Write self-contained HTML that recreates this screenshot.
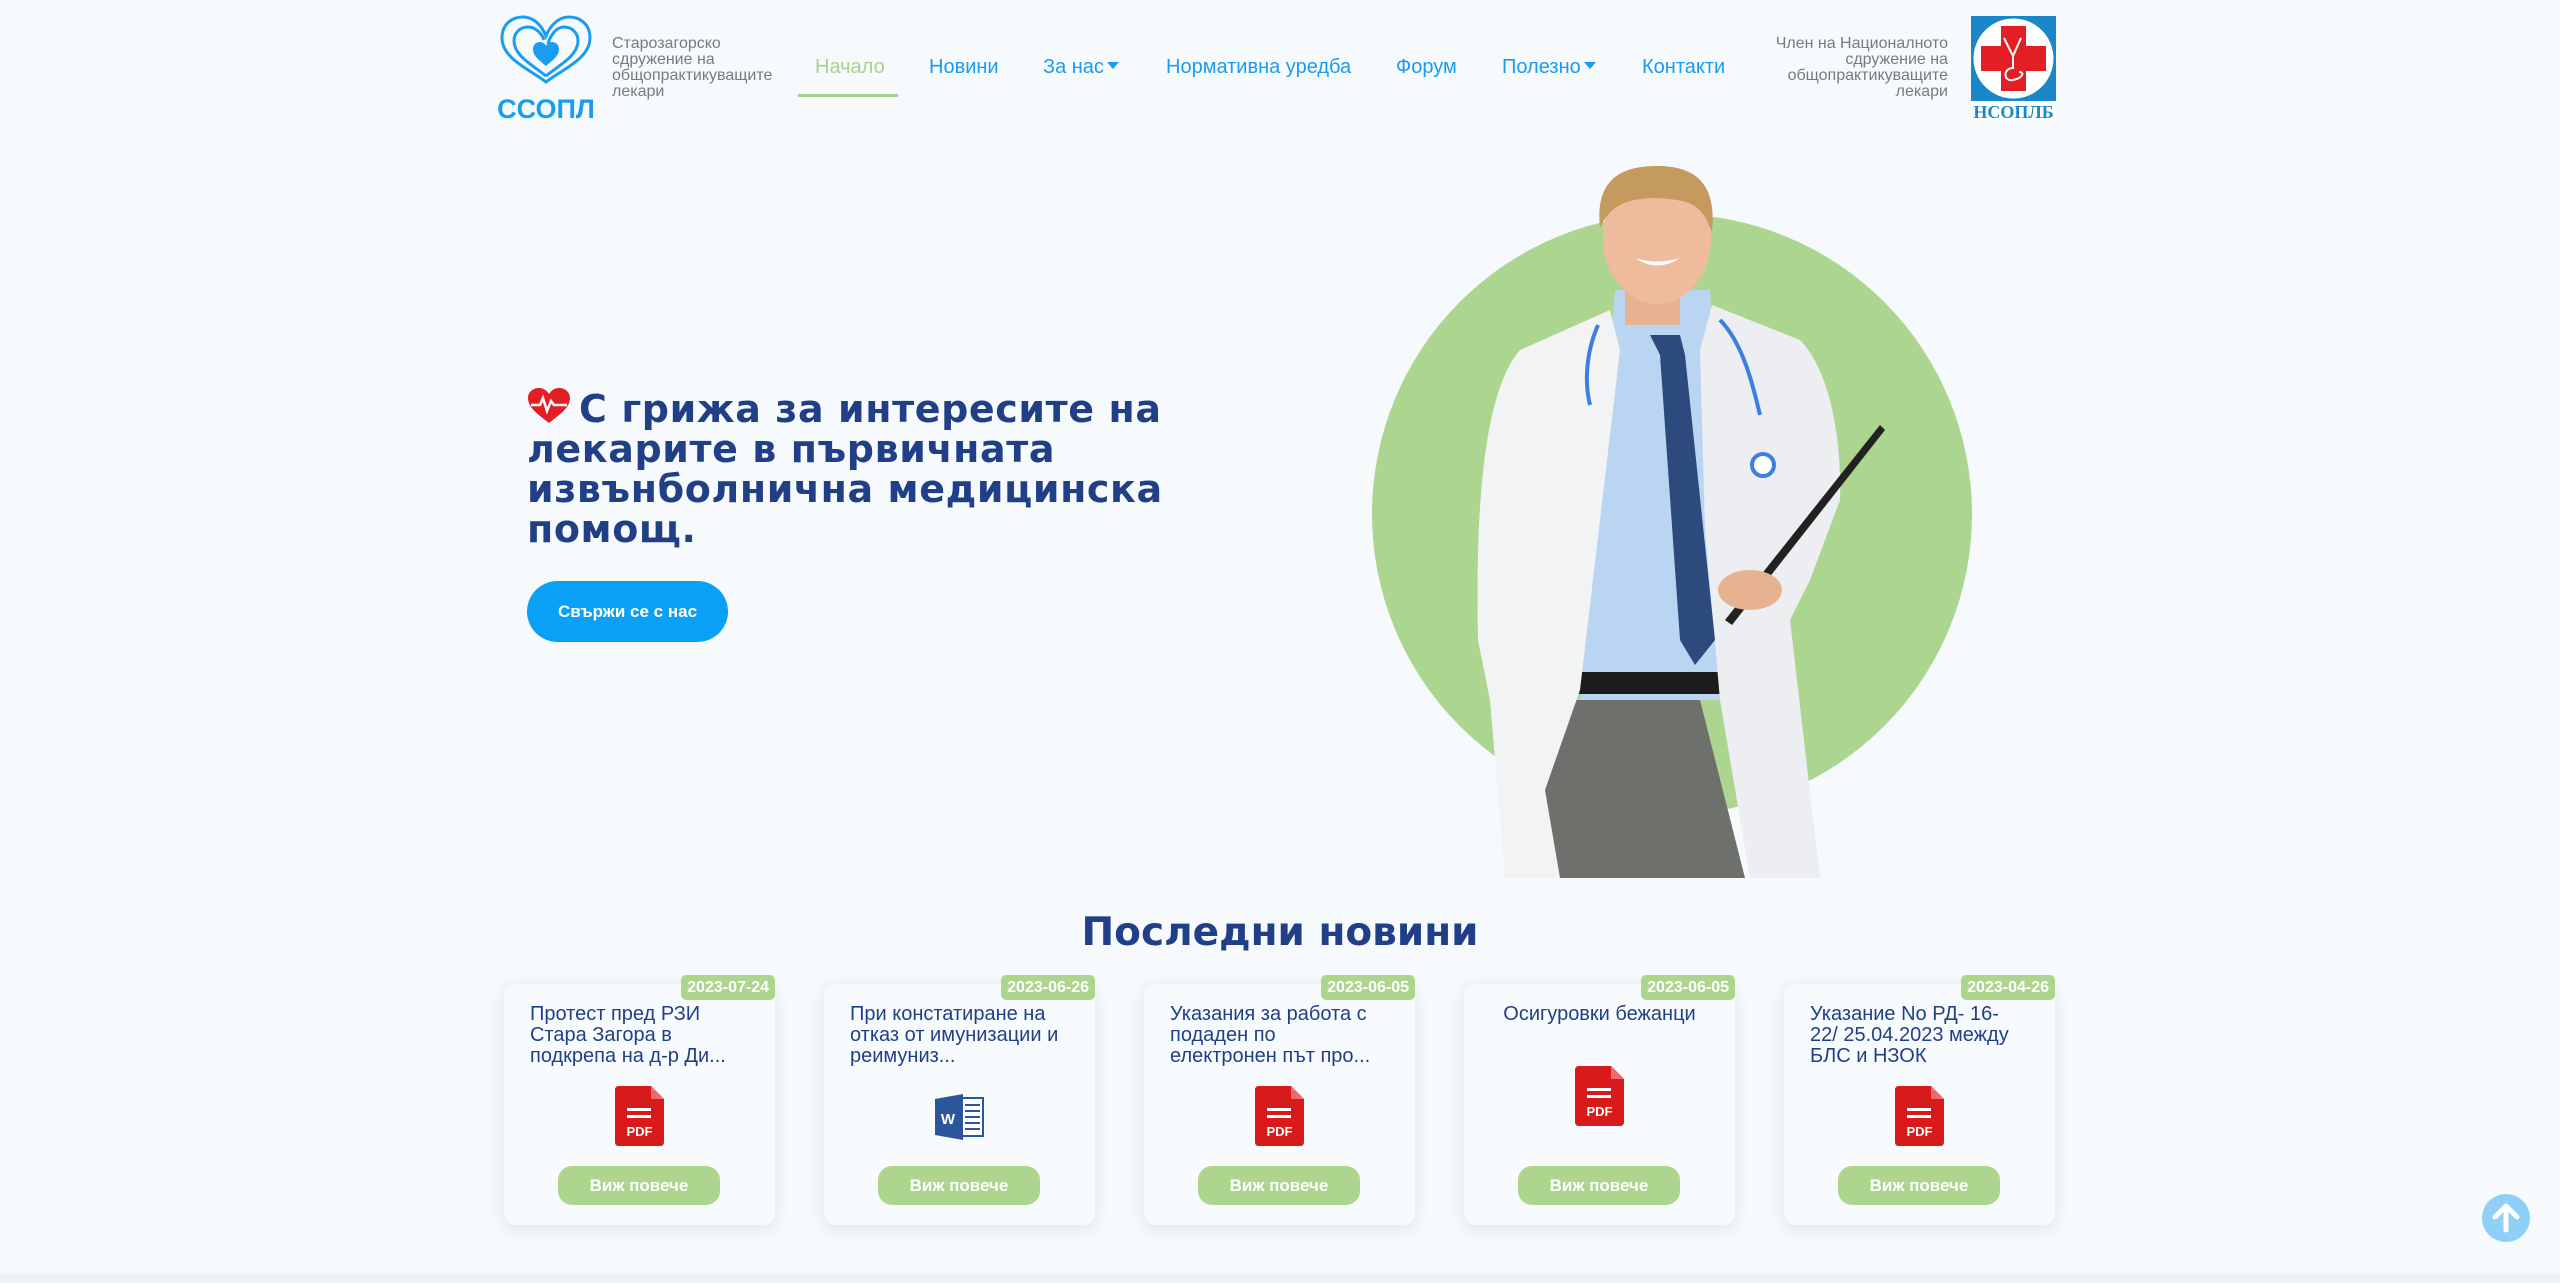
<!DOCTYPE html>
<html><head><meta charset="utf-8">
<style>
*{margin:0;padding:0;box-sizing:border-box}
html,body{width:2560px;height:1283px;overflow:hidden;background:#f6fafd;font-family:"Liberation Sans",Arial,sans-serif}
.a{position:absolute}
.nav{position:absolute;top:56px;font-size:20px;color:#1a9cf0;white-space:nowrap}
.caret{display:inline-block;width:0;height:0;border-left:6px solid transparent;border-right:6px solid transparent;border-top:7px solid #1a9cf0;vertical-align:middle;margin-left:3px;margin-top:-4px}
.smalltxt{font-size:16px;line-height:16px;color:#7a7a7a}
h1{position:absolute;left:527px;top:388px;width:700px;font-family:"DejaVu Sans",sans-serif;font-size:38px;line-height:40px;color:#213f86;font-weight:bold;letter-spacing:0.6px}
.card{position:absolute;top:984px;width:271px;height:241px;background:#f8fbfe;border-radius:12px;box-shadow:0 4px 18px rgba(0,0,0,0.09)}
.date{position:absolute;right:0;top:-9px;height:25px;padding:0 6px;background:#aed58e;color:#fff;font-size:16px;font-weight:bold;line-height:25px;border-radius:5px}
.ttl{position:absolute;left:26px;top:20px;width:215px;font-size:20px;line-height:21px;color:#213f86}
.btn{position:absolute;left:54px;top:182px;width:162px;height:39px;border-radius:14px;background:#aed58e;color:#fff;font-weight:bold;font-size:17px;text-align:center;line-height:39px}
.ic{position:absolute;left:111px;top:102px}
</style></head><body>

<svg class="a" style="left:496px;top:14px" width="100" height="110" viewBox="0 0 100 110">
 <g fill="none" stroke="#1a9cf0" stroke-width="3">
  <path d="M50 68 C35 56 6 45 6 24 C6 10 16 3 27 3 C38 3 46 12 50 22 C54 12 62 3 73 3 C84 3 94 10 94 24 C94 45 65 56 50 68Z"/>
  <path d="M50 62 C38 52 18 42 18 27 C18 18 25 13 32 13 C40 13 46 20 48 26"/>
  <path d="M50 62 C62 52 82 42 82 27 C82 18 75 13 68 13 C60 13 54 22 52 30"/>
 </g>
 <path fill="#1a9cf0" d="M50 52 C43 46 37 42 37 35 C37 31 40 28 44 28 C47 28 49 30 50 32 C51 30 53 28 56 28 C60 28 63 31 63 35 C63 42 57 46 50 52Z"/>
 <text x="50" y="104" text-anchor="middle" font-family="Liberation Sans" font-weight="bold" font-size="27" fill="#1a9cf0">ССОПЛ</text>
</svg>
<div class="a smalltxt" style="left:612px;top:36px;width:170px">Старозагорско сдружение на общопрактикуващите лекари</div>

<div class="nav" style="left:815px;color:#a9d18e">Начало</div>
<div class="a" style="left:798px;top:94px;width:100px;height:3px;background:#a9d18e"></div>
<div class="nav" style="left:929px">Новини</div>
<div class="nav" style="left:1043px">За нас<span class="caret"></span></div>
<div class="nav" style="left:1166px">Нормативна уредба</div>
<div class="nav" style="left:1396px">Форум</div>
<div class="nav" style="left:1502px">Полезно<span class="caret"></span></div>
<div class="nav" style="left:1642px">Контакти</div>

<div class="a smalltxt" style="left:1760px;top:36px;width:188px;text-align:right">Член на Националното сдружение на общопрактикуващите лекари</div>
<svg class="a" style="left:1971px;top:16px" width="85" height="104" viewBox="0 0 85 104">
 <rect width="85" height="85" fill="#1a87c8"/>
 <circle cx="42.5" cy="42.5" r="40" fill="#fff"/>
 <path fill="#e31e24" d="M30 10h25v20h20v25h-20v20h-25v-20h-20v-25h20z"/>
 <path fill="none" stroke="#fff" stroke-width="2" d="M33 22 L42 40 L50 22 M42 40 V52 C32 52 32 66 42 64 C52 62 54 56 48 56"/>
 <rect y="85" width="85" height="19" fill="#fff"/>
 <text x="42.5" y="102" text-anchor="middle" font-family="Liberation Serif" font-weight="bold" font-size="18" fill="#1a87c8">НСОПЛБ</text>
</svg>

<h1><svg width="44" height="36" viewBox="0 0 44 36" style="vertical-align:-2px;margin-right:8px"><path fill="#e31e24" d="M22 35 C12 27 1 20 1 10 C1 4 6 0 12 0 C17 0 20 3 22 6 C24 3 27 0 32 0 C38 0 43 4 43 10 C43 20 32 27 22 35Z"/><path fill="none" stroke="#fff" stroke-width="2.5" d="M4 17 H13 L16 10 L20 23 L24 13 L27 17 H40"/></svg>С грижа за интересите на лекарите в първичната извънболнична медицинска помощ.</h1>
<div class="a" style="left:527px;top:581px;width:201px;height:61px;border-radius:31px;background:#0aa0f5;color:#fff;font-weight:bold;font-size:17px;line-height:61px;text-align:center">Свържи се с нас</div>

<svg class="a" style="left:0;top:0" width="2560" height="900" viewBox="0 0 2560 900">
 <circle cx="1672" cy="514" r="300" fill="#acd58f"/>
 <path fill="#6e706c" d="M1545 700 L1700 700 L1745 878 L1545 878Z"/>
 <path fill="#b9d5f2" d="M1615 290 L1710 290 L1730 700 L1580 700 Z"/>
 <rect x="1575" y="672" width="160" height="22" fill="#1c1c1c"/>
 <path fill="#f2f3f5" d="M1610 310 L1520 350 C1485 390 1475 500 1478 640 L1490 700 L1505 878 L1560 878 L1545 790 L1580 690 L1600 520 L1620 350 Z"/>
 <path fill="#eceef1" d="M1712 305 L1800 340 C1830 370 1842 440 1840 500 L1810 580 L1790 620 L1820 878 L1750 878 L1720 700 L1705 530 L1700 350 Z"/>
 <path fill="#2c4a7c" d="M1650 335 L1680 335 L1685 355 L1715 640 L1695 665 L1680 640 L1660 355Z"/>
 <rect x="1625" y="280" width="55" height="45" fill="#e7b290"/>
 <ellipse cx="1657" cy="238" rx="54" ry="66" fill="#eebc9c"/>
 <path fill="#c49a5e" d="M1600 228 C1595 180 1620 166 1657 166 C1697 166 1717 185 1712 232 C1702 205 1692 200 1657 198 C1627 198 1610 205 1600 228Z"/>
 <path fill="#fff" d="M1635 258 Q1657 273 1680 258 Q1657 265 1635 258Z"/>
 <path fill="none" stroke="#3d7fe0" stroke-width="4" d="M1598 325 C1585 355 1585 385 1590 405 M1720 320 C1745 345 1755 395 1760 415"/>
 <circle cx="1763" cy="465" r="11" fill="#fff" stroke="#3d7fe0" stroke-width="4"/>
 <path fill="#222" d="M1725 620 L1880 425 L1885 430 L1732 625Z"/>
 <ellipse cx="1750" cy="590" rx="32" ry="20" fill="#e7b290"/>
</svg>

<div class="a" style="left:0;top:910px;width:2560px;text-align:center;font-family:'DejaVu Sans',sans-serif;font-size:39px;font-weight:bold;color:#213f86">Последни новини</div>

<div class="card" style="left:504px"><div class="date">2023-07-24</div><div class="ttl">Протест пред РЗИ Стара Загора в подкрепа на д-р Ди...</div>
<svg class="ic" width="49" height="60" viewBox="0 0 49 60"><path fill="#d81a1a" d="M4 0 H36 L49 13 V56 Q49 60 45 60 H4 Q0 60 0 56 V4 Q0 0 4 0Z"/><path fill="#ef6a6a" d="M36 0 L49 13 H36Z"/><rect x="12" y="22" width="24" height="3" fill="#fff"/><rect x="12" y="29" width="24" height="3" fill="#fff"/><text x="24.5" y="50" text-anchor="middle" font-family="Liberation Sans" font-weight="bold" font-size="13" fill="#fff">PDF</text></svg>
<div class="btn">Виж повече</div></div>

<div class="card" style="left:824px"><div class="date">2023-06-26</div><div class="ttl">При констатиране на отказ от имунизации и реимуниз...</div>
<svg class="ic" style="top:110px" width="49" height="46" viewBox="0 0 49 46"><rect x="16" y="4" width="32" height="38" fill="#fff" stroke="#2b579a" stroke-width="2"/><g stroke="#2b579a" stroke-width="2"><path d="M30 11H45M30 17H45M30 23H45M30 29H45M30 35H45"/></g><path fill="#2b579a" d="M0 5 L28 0 V46 L0 41Z"/><text x="13" y="30" text-anchor="middle" font-family="Liberation Sans" font-weight="bold" font-size="15" fill="#fff">W</text></svg>
<div class="btn">Виж повече</div></div>

<div class="card" style="left:1144px"><div class="date">2023-06-05</div><div class="ttl" style="width:205px">Указания за работа с подаден по електронен път про...</div>
<svg class="ic" width="49" height="60" viewBox="0 0 49 60"><path fill="#d81a1a" d="M4 0 H36 L49 13 V56 Q49 60 45 60 H4 Q0 60 0 56 V4 Q0 0 4 0Z"/><path fill="#ef6a6a" d="M36 0 L49 13 H36Z"/><rect x="12" y="22" width="24" height="3" fill="#fff"/><rect x="12" y="29" width="24" height="3" fill="#fff"/><text x="24.5" y="50" text-anchor="middle" font-family="Liberation Sans" font-weight="bold" font-size="13" fill="#fff">PDF</text></svg>
<div class="btn">Виж повече</div></div>

<div class="card" style="left:1464px"><div class="date">2023-06-05</div><div class="ttl" style="left:0;width:271px;text-align:center">Осигуровки бежанци</div>
<svg class="ic" style="top:82px" width="49" height="60" viewBox="0 0 49 60"><path fill="#d81a1a" d="M4 0 H36 L49 13 V56 Q49 60 45 60 H4 Q0 60 0 56 V4 Q0 0 4 0Z"/><path fill="#ef6a6a" d="M36 0 L49 13 H36Z"/><rect x="12" y="22" width="24" height="3" fill="#fff"/><rect x="12" y="29" width="24" height="3" fill="#fff"/><text x="24.5" y="50" text-anchor="middle" font-family="Liberation Sans" font-weight="bold" font-size="13" fill="#fff">PDF</text></svg>
<div class="btn">Виж повече</div></div>

<div class="card" style="left:1784px"><div class="date">2023-04-26</div><div class="ttl">Указание No РД- 16-22/ 25.04.2023 между БЛС и НЗОК</div>
<svg class="ic" width="49" height="60" viewBox="0 0 49 60"><path fill="#d81a1a" d="M4 0 H36 L49 13 V56 Q49 60 45 60 H4 Q0 60 0 56 V4 Q0 0 4 0Z"/><path fill="#ef6a6a" d="M36 0 L49 13 H36Z"/><rect x="12" y="22" width="24" height="3" fill="#fff"/><rect x="12" y="29" width="24" height="3" fill="#fff"/><text x="24.5" y="50" text-anchor="middle" font-family="Liberation Sans" font-weight="bold" font-size="13" fill="#fff">PDF</text></svg>
<div class="btn">Виж повече</div></div>

<svg class="a" style="left:2482px;top:1194px" width="48" height="48" viewBox="0 0 48 48"><circle cx="24" cy="24" r="24" fill="#8fd0f8"/><path fill="none" stroke="#fff" stroke-width="5" stroke-linecap="round" stroke-linejoin="round" d="M24 36V13M13 23L24 12L35 23"/></svg>
<div class="a" style="left:0;top:1273px;width:2560px;height:10px;background:#eef3f7"></div>
</body></html>
